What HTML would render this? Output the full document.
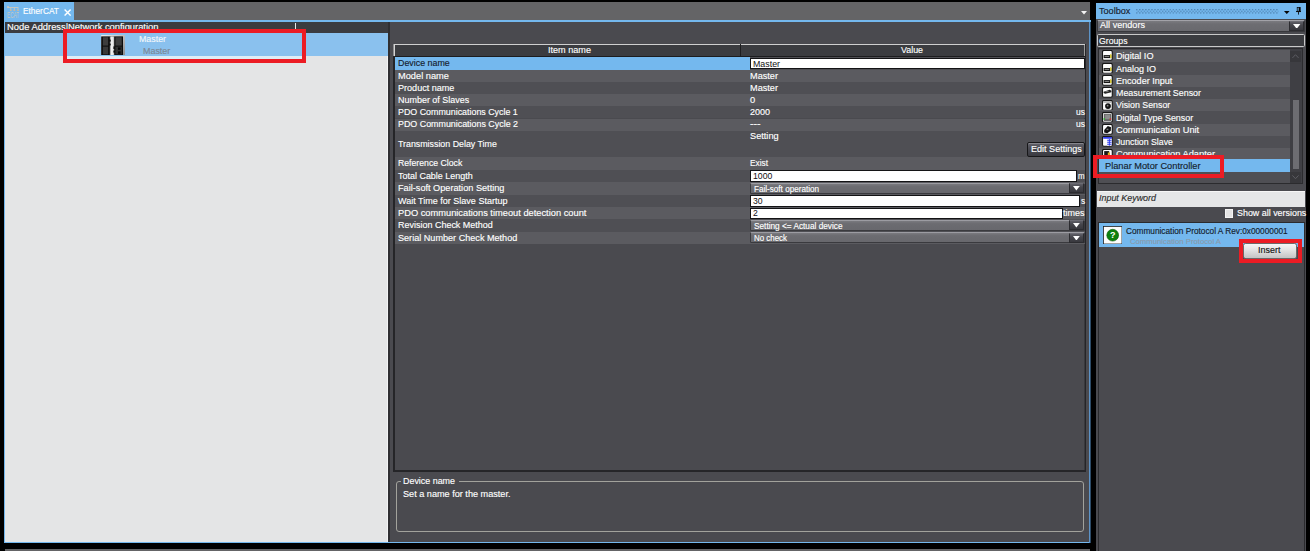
<!DOCTYPE html>
<html lang="en"><head><meta charset="utf-8"><title>EtherCAT</title>
<style>
html,body{margin:0;padding:0;background:#000;}
body{width:1310px;height:551px;position:relative;overflow:hidden;font-family:'Liberation Sans', sans-serif;}
#app{position:absolute;left:0;top:0;width:1310px;height:551px;overflow:hidden;background:#000;}
#app div,#app svg{position:absolute;box-sizing:border-box;}
.t{position:absolute;display:block;white-space:nowrap;transform-origin:0 50%;-webkit-text-stroke:0.14px currentColor;}
</style></head><body><div id="app">
<div style="left:4px;top:2.2px;width:1086px;height:17.8px;background:#646466;"></div>
<div style="left:4px;top:2.2px;width:69.8px;height:17.8px;background:#74b8ee;"></div>
<div style="left:4px;top:19.8px;width:1087px;height:523.2px;background:#74b8ee;"></div>
<div style="left:1089px;top:22px;width:1px;height:521px;background:#5e93c6;"></div>
<div style="left:1090px;top:22px;width:1px;height:521px;background:#2c4a66;"></div>
<div style="left:5px;top:21.7px;width:383px;height:520.5px;background:#e4e5e6;"></div>
<div style="left:387px;top:33px;width:1px;height:509px;background:#f2f3f4;"></div>
<div style="left:388px;top:21.7px;width:2px;height:520.5px;background:#2f2f32;"></div>
<div style="left:390px;top:21.7px;width:699px;height:520.5px;background:#4a4a4f;"></div>
<div style="left:4.5px;top:548.8px;width:1085px;height:3px;background:#646466;"></div>
<svg style="left:6.8px;top:6.1px" width="12.6" height="12.6" viewBox="0 0 12.6 12.6"><g fill="#dccbb4" opacity=".85"><rect x="0.1" y="0.1" width="1.7" height="2"/><rect x="1" y="1" width="10.4" height="0.9"/><rect x="3.4" y="1.5" width="0.8" height="2.6"/><rect x="6.9" y="1.5" width="0.8" height="2.6"/><rect x="10.6" y="1.5" width="0.8" height="2.6"/><rect x="2.9" y="3.6" width="1.8" height="1.3" fill="#e0b98c"/><rect x="6.4" y="3.6" width="1.8" height="1.3" fill="#e0b98c"/><rect x="10.1" y="3.6" width="1.8" height="1.3" fill="#e0b98c"/></g><text x="0" y="12.2" font-size="8.4" font-family="Liberation Sans, sans-serif" fill="#dccbb4" opacity=".8" textLength="12.2" lengthAdjust="spacingAndGlyphs">ECAT</text></svg>
<span class="t" style="left:22.90px;top:5.48px;font-size:8.65px;line-height:12.65px;color:#fff;transform:scaleX(0.9642);">EtherCAT</span>
<svg style="left:63.8px;top:9.1px" width="7.2" height="7.2" viewBox="0 0 7.2 7.2"><path d="M0.6 0.6 L6.6 6.6 M6.6 0.6 L0.6 6.6" stroke="#fff" stroke-width="1.35" fill="none"/></svg>
<svg style="left:1081px;top:11.3px" width="6" height="4" viewBox="0 0 6 4"><path d="M0 0 H6 L3 3.6 Z" fill="#f4f4f4"/></svg>
<div style="left:5px;top:21.7px;width:383px;height:11.6px;background:#3b3c40;"></div>
<span class="t" style="left:6.50px;top:21.05px;font-size:9.3px;line-height:13.3px;color:#fff;transform:scaleX(1.0044);">Node Address|Network configuration</span>
<div style="left:294.8px;top:23.3px;width:1px;height:10px;background:#e8e8e8;"></div>
<div style="left:5px;top:33.3px;width:383px;height:22.8px;background:#8ac1ee;"></div>
<svg style="left:100.6px;top:35.1px" width="24" height="20.4" viewBox="0 0 24 20.4"><defs><linearGradient id="dv" x1="0" x2="1"><stop offset="0" stop-color="#8c8c8c"/><stop offset=".45" stop-color="#ffffff"/><stop offset="1" stop-color="#b8b8b8"/></linearGradient><linearGradient id="dvb" x1="0" x2="1" y1="0" y2="1"><stop offset="0" stop-color="#f0f0f0"/><stop offset="1" stop-color="#8a8a8a"/></linearGradient></defs><rect x="0" y="0" width="24" height="20.4" rx="0.8" fill="url(#dvb)"/><rect x="0.2" y="1.4" width="21.8" height="19" fill="#0b0b0b"/><rect x="1.8" y="2.2" width="5.4" height="8.4" fill="#3d3d3d"/><rect x="1.8" y="11.6" width="5.4" height="7.8" fill="#383838"/><rect x="8.8" y="1.4" width="4.4" height="19" fill="url(#dv)"/><rect x="8.2" y="4.6" width="1.5" height="2" fill="#0b0b0b"/><rect x="8.2" y="8.6" width="1.5" height="1.8" fill="#0b0b0b"/><rect x="12.4" y="11.4" width="1.5" height="2.6" fill="#0b0b0b"/><rect x="12.4" y="15.6" width="1.5" height="2" fill="#0b0b0b"/><rect x="14.4" y="2.2" width="6.4" height="8.4" fill="#3d3d3d"/><rect x="14.4" y="11.6" width="6.4" height="7.8" fill="#303030"/><rect x="17" y="12.4" width="2.6" height="2.4" fill="#050505"/><rect x="17" y="16.4" width="2.6" height="2.4" fill="#050505"/></svg>
<span class="t" style="left:139.20px;top:32.55px;font-size:9.3px;line-height:13.3px;color:#f4f8fc;transform:scaleX(0.9500);">Master</span>
<span class="t" style="left:143.00px;top:44.85px;font-size:9.3px;line-height:13.3px;color:#7b8794;transform:scaleX(0.9605);">Master</span>
<div style="left:66px;top:56.1px;width:238px;height:4px;background:#dfedf6;"></div>
<div style="left:62.8px;top:29.2px;width:243.3px;height:34px;background:transparent;border:4px solid #ec1c24;"></div>
<div style="left:393px;top:44px;width:693px;height:428px;background:#252528;"></div>
<div style="left:395px;top:44px;width:690px;height:426px;background:#4a4a4f;"></div>
<div style="left:1084px;top:57px;width:1px;height:413px;background:rgba(37,37,40,.45);"></div>
<div style="left:393px;top:44px;width:692px;height:12.3px;background:#3b3c40;"></div>
<div style="left:393px;top:44px;width:347px;height:1px;background:#cfcfcf;"></div>
<div style="left:741px;top:44px;width:344px;height:1px;background:#cfcfcf;"></div>
<div style="left:393px;top:44px;width:1px;height:12.3px;background:#8e8e90;"></div>
<div style="left:394px;top:44px;width:1px;height:12.3px;background:#d4d4d4;"></div>
<div style="left:1084px;top:45px;width:1px;height:11.3px;background:#9a9a9a;"></div>
<div style="left:740px;top:44px;width:1px;height:12.3px;background:#1e1e20;"></div>
<div style="left:395px;top:56px;width:690px;height:1.3px;background:#1c1c1e;"></div>
<span class="t" style="left:547.90px;top:43.65px;font-size:9.3px;line-height:13.3px;color:#fff;transform:scaleX(0.9790);">Item name</span>
<span class="t" style="left:901.30px;top:43.65px;font-size:9.3px;line-height:13.3px;color:#fff;transform:scaleX(0.9526);">Value</span>
<div style="left:395px;top:57.3px;width:690px;height:12.400000000000006px;background:#4f4f54;"></div>
<div style="left:395px;top:57.3px;width:355.20000000000005px;height:12.400000000000006px;background:#74b8ee;"></div>
<span class="t" style="left:397.80px;top:57.35px;font-size:9.3px;line-height:13.3px;color:#14202c;transform:scaleX(0.9527);">Device name</span>
<div style="left:395px;top:69.7px;width:690px;height:12.200000000000003px;background:#5b5b60;"></div>
<span class="t" style="left:397.80px;top:69.65px;font-size:9.3px;line-height:13.3px;color:#fff;transform:scaleX(0.9947);">Model name</span>
<div style="left:395px;top:81.9px;width:690px;height:12.199999999999989px;background:#4f4f54;"></div>
<span class="t" style="left:397.80px;top:81.85px;font-size:9.3px;line-height:13.3px;color:#fff;transform:scaleX(0.9743);">Product name</span>
<div style="left:395px;top:94.1px;width:690px;height:12.200000000000003px;background:#5b5b60;"></div>
<span class="t" style="left:397.80px;top:94.05px;font-size:9.3px;line-height:13.3px;color:#fff;transform:scaleX(0.9636);">Number of Slaves</span>
<div style="left:395px;top:106.3px;width:690px;height:12.200000000000003px;background:#4f4f54;"></div>
<span class="t" style="left:397.80px;top:106.25px;font-size:9.3px;line-height:13.3px;color:#fff;transform:scaleX(0.9541);">PDO Communications Cycle 1</span>
<div style="left:395px;top:118.5px;width:690px;height:12.199999999999989px;background:#5b5b60;"></div>
<span class="t" style="left:397.80px;top:118.45px;font-size:9.3px;line-height:13.3px;color:#fff;transform:scaleX(0.9557);">PDO Communications Cycle 2</span>
<div style="left:395px;top:130.7px;width:690px;height:26.600000000000023px;background:#4f4f54;"></div>
<span class="t" style="left:397.80px;top:137.85px;font-size:9.3px;line-height:13.3px;color:#fff;transform:scaleX(0.9499);">Transmission Delay Time</span>
<div style="left:395px;top:157.3px;width:690px;height:12.449999999999989px;background:#5b5b60;"></div>
<span class="t" style="left:397.80px;top:157.38px;font-size:9.3px;line-height:13.3px;color:#fff;transform:scaleX(0.9355);">Reference Clock</span>
<div style="left:395px;top:169.75px;width:690px;height:12.449999999999989px;background:#4f4f54;"></div>
<span class="t" style="left:397.80px;top:169.82px;font-size:9.3px;line-height:13.3px;color:#fff;transform:scaleX(0.9635);">Total Cable Length</span>
<div style="left:395px;top:182.2px;width:690px;height:12.400000000000006px;background:#5b5b60;"></div>
<span class="t" style="left:397.80px;top:182.25px;font-size:9.3px;line-height:13.3px;color:#fff;transform:scaleX(0.9852);">Fail-soft Operation Setting</span>
<div style="left:395px;top:194.6px;width:690px;height:12.400000000000006px;background:#4f4f54;"></div>
<span class="t" style="left:397.80px;top:194.65px;font-size:9.3px;line-height:13.3px;color:#fff;transform:scaleX(0.9706);">Wait Time for Slave Startup</span>
<div style="left:395px;top:207.0px;width:690px;height:12.349999999999994px;background:#5b5b60;"></div>
<span class="t" style="left:397.80px;top:207.03px;font-size:9.3px;line-height:13.3px;color:#fff;transform:scaleX(0.9988);">PDO communications timeout detection count</span>
<div style="left:395px;top:219.35px;width:690px;height:12.349999999999994px;background:#4f4f54;"></div>
<span class="t" style="left:397.80px;top:219.37px;font-size:9.3px;line-height:13.3px;color:#fff;transform:scaleX(0.9655);">Revision Check Method</span>
<div style="left:395px;top:231.7px;width:690px;height:12.300000000000011px;background:#5b5b60;"></div>
<span class="t" style="left:397.80px;top:231.70px;font-size:9.3px;line-height:13.3px;color:#fff;transform:scaleX(0.9782);">Serial Number Check Method</span>
<div style="left:750.1999999999999px;top:57.9px;width:334.3999999999999px;height:11.400000000000006px;background:#fff;border:1px solid #141416;"></div>
<span class="t" style="left:752.60px;top:57.55px;font-size:9.3px;line-height:13.3px;color:#111;transform:scaleX(0.9500);-webkit-text-stroke:0;">Master</span>
<span class="t" style="left:750.40px;top:69.65px;font-size:9.3px;line-height:13.3px;color:#fff;transform:scaleX(0.9852);">Master</span>
<span class="t" style="left:750.40px;top:81.85px;font-size:9.3px;line-height:13.3px;color:#fff;transform:scaleX(0.9852);">Master</span>
<span class="t" style="left:750.40px;top:94.05px;font-size:9.3px;line-height:13.3px;color:#fff;transform:scaleX(1.0054);">0</span>
<span class="t" style="left:750.40px;top:106.25px;font-size:9.3px;line-height:13.3px;color:#fff;transform:scaleX(0.9668);">2000</span>
<span class="t" style="left:1075.70px;top:106.25px;font-size:9.3px;line-height:13.3px;color:#fff;transform:scaleX(0.9157);">us</span>
<span class="t" style="left:750.40px;top:118.45px;font-size:9.3px;line-height:13.3px;color:#fff;transform:scaleX(1.1402);">---</span>
<span class="t" style="left:1075.70px;top:118.45px;font-size:9.3px;line-height:13.3px;color:#fff;transform:scaleX(0.9157);">us</span>
<span class="t" style="left:750.40px;top:129.95px;font-size:9.3px;line-height:13.3px;color:#fff;transform:scaleX(0.9878);">Setting</span>
<div style="left:1027.3px;top:142.2px;width:57.3px;height:15.3px;background:#4a4a52;background:linear-gradient(#63636b,#4a4a52 45%,#3a3a40);border:1px solid #18181a;border-radius:2px;box-shadow:inset 0 1px 0 #85858c;"></div>
<span class="t" style="left:1030.80px;top:142.55px;font-size:9.3px;line-height:13.3px;color:#fff;transform:scaleX(0.9731);">Edit Settings</span>
<span class="t" style="left:750.40px;top:157.38px;font-size:9.3px;line-height:13.3px;color:#fff;transform:scaleX(0.8930);">Exist</span>
<div style="left:750.1999999999999px;top:170.35px;width:326.59999999999997px;height:11.449999999999989px;background:#fff;border:1px solid #141416;"></div>
<span class="t" style="left:752.60px;top:170.02px;font-size:9.3px;line-height:13.3px;color:#111;transform:scaleX(0.9329);-webkit-text-stroke:0;">1000</span>
<span class="t" style="left:1078.00px;top:170.12px;font-size:9.3px;line-height:13.3px;color:#fff;transform:scaleX(0.8516);">m</span>
<div style="left:750.4px;top:182.5px;width:334.19999999999993px;height:11.500000000000005px;background:#6e6e73;background:linear-gradient(#7a7a7f,#6c6c71 30%,#68686d);border:1px solid #3a3a3e;border-top-color:#9c9ca2;border-radius:1.5px;"></div>
<div style="left:1069px;top:183.2px;width:15px;height:10.200000000000006px;background:#404046;background:linear-gradient(#5e5e66,#46464c 40%,#38383e);border:1px solid #2c2c30;border-top-color:#6c6c74;"></div>
<svg style="left:1073.2px;top:186.20px" width="6.8" height="4.6" viewBox="0 0 6.8 4.6"><path d="M0 0 H6.8 L3.4 4.6 Z" fill="#fff"/></svg>
<span class="t" style="left:753.90px;top:182.51px;font-size:8.37px;line-height:12.37px;color:#fff;transform:scaleX(0.9713);">Fail-soft operation</span>
<div style="left:750.1999999999999px;top:195.2px;width:330.09999999999997px;height:11.400000000000006px;background:#fff;border:1px solid #141416;"></div>
<span class="t" style="left:752.60px;top:194.85px;font-size:9.3px;line-height:13.3px;color:#111;transform:scaleX(0.9281);-webkit-text-stroke:0;">30</span>
<span class="t" style="left:1080.60px;top:194.95px;font-size:9.3px;line-height:13.3px;color:#fff;transform:scaleX(0.9020);">s</span>
<div style="left:750.1999999999999px;top:207.6px;width:312.3999999999999px;height:11.349999999999994px;background:#fff;border:1px solid #141416;"></div>
<span class="t" style="left:752.60px;top:207.22px;font-size:9.3px;line-height:13.3px;color:#111;transform:scaleX(0.9281);-webkit-text-stroke:0;">2</span>
<span class="t" style="left:1063.20px;top:207.33px;font-size:9.3px;line-height:13.3px;color:#fff;transform:scaleX(0.9677);">times</span>
<div style="left:750.4px;top:219.65px;width:334.19999999999993px;height:11.449999999999994px;background:#6e6e73;background:linear-gradient(#7a7a7f,#6c6c71 30%,#68686d);border:1px solid #3a3a3e;border-top-color:#9c9ca2;border-radius:1.5px;"></div>
<div style="left:1069px;top:220.35px;width:15px;height:10.149999999999995px;background:#404046;background:linear-gradient(#5e5e66,#46464c 40%,#38383e);border:1px solid #2c2c30;border-top-color:#6c6c74;"></div>
<svg style="left:1073.2px;top:223.35px" width="6.8" height="4.6" viewBox="0 0 6.8 4.6"><path d="M0 0 H6.8 L3.4 4.6 Z" fill="#fff"/></svg>
<span class="t" style="left:753.90px;top:219.64px;font-size:8.37px;line-height:12.37px;color:#fff;transform:scaleX(0.9866);">Setting &lt;= Actual device</span>
<div style="left:750.4px;top:232.0px;width:334.19999999999993px;height:11.400000000000011px;background:#6e6e73;background:linear-gradient(#7a7a7f,#6c6c71 30%,#68686d);border:1px solid #3a3a3e;border-top-color:#9c9ca2;border-radius:1.5px;"></div>
<div style="left:1069px;top:232.7px;width:15px;height:10.100000000000012px;background:#404046;background:linear-gradient(#5e5e66,#46464c 40%,#38383e);border:1px solid #2c2c30;border-top-color:#6c6c74;"></div>
<svg style="left:1073.2px;top:235.70px" width="6.8" height="4.6" viewBox="0 0 6.8 4.6"><path d="M0 0 H6.8 L3.4 4.6 Z" fill="#fff"/></svg>
<span class="t" style="left:753.90px;top:231.97px;font-size:8.37px;line-height:12.37px;color:#fff;transform:scaleX(0.9467);">No check</span>
<div style="left:396px;top:481px;width:688px;height:51px;background:transparent;border:1px solid #a2a29c;border-radius:3px;"></div>
<div style="left:400.5px;top:479px;width:58px;height:4px;background:#4a4a4f;"></div>
<span class="t" style="left:402.50px;top:475.15px;font-size:9.3px;line-height:13.3px;color:#fff;transform:scaleX(0.9582);">Device name</span>
<span class="t" style="left:402.50px;top:488.35px;font-size:9.3px;line-height:13.3px;color:#fff;transform:scaleX(0.9812);">Set a name for the master.</span>
<div style="left:1095.5px;top:3px;width:210.5px;height:548px;background:#4a4a4f;"></div>
<div style="left:1095.5px;top:3px;width:210.5px;height:16.3px;background:#74b8ee;"></div>
<span class="t" style="left:1099.00px;top:4.95px;font-size:9.3px;line-height:13.3px;color:#14202c;transform:scaleX(0.9798);">Toolbox</span>
<svg style="left:1136px;top:8.7px" width="142.5" height="5.1" viewBox="0 0 142.5 5.1"><defs><pattern id="dots" width="3.05" height="3.4" patternUnits="userSpaceOnUse"><rect x="0" y="0" width="1.3" height="1.2" fill="#44749f"/><rect x="1.52" y="1.7" width="1.3" height="1.2" fill="#44749f"/></pattern></defs><rect width="142.5" height="5.1" fill="url(#dots)" opacity=".8"/></svg>
<svg style="left:1284.4px;top:10.6px" width="5.6" height="3.1" viewBox="0 0 5.6 3.1"><path d="M0 0 H5.6 L2.8 3.1 Z" fill="#060606"/></svg>
<svg style="left:1296.2px;top:7.1px" width="5" height="7.6" viewBox="0 0 5 7.6"><rect x="1.2" y="0.35" width="2.9" height="3.9" fill="none" stroke="#060606" stroke-width="0.75"/><rect x="2.7" y="0.2" width="1.6" height="4.2" fill="#060606"/><rect x="0" y="4.1" width="5" height="0.95" fill="#060606"/><rect x="2.1" y="5" width="0.85" height="2.6" fill="#060606"/></svg>
<div style="left:1097px;top:19.8px;width:207.79999999999995px;height:12.1px;background:#6e6e73;background:linear-gradient(#7b7b80,#6d6d72 30%,#69696e);border:1px solid #38383c;border-top-color:#a2a2a8;border-radius:1.5px;"></div>
<div style="left:1289px;top:20.8px;width:15px;height:10.2px;background:#404046;background:linear-gradient(#5e5e66,#46464c 40%,#38383e);border:1px solid #2c2c30;border-top-color:#6c6c74;"></div>
<svg style="left:1293.2px;top:23.6px" width="7.4" height="4.8" viewBox="0 0 7.4 4.8"><path d="M0 0 H7.4 L3.7 4.8 Z" fill="#fff"/></svg>
<span class="t" style="left:1099.80px;top:19.15px;font-size:9.3px;line-height:13.3px;color:#fff;transform:scaleX(0.9783);">All vendors</span>
<div style="left:1097px;top:34.3px;width:207.5999999999999px;height:12.6px;background:#3b3c40;border:1px solid #c9c9c9;border-radius:1.5px;"></div>
<span class="t" style="left:1098.50px;top:35.25px;font-size:9.3px;line-height:13.3px;color:#fff;transform:scaleX(0.9344);">Groups</span>
<div style="left:1098px;top:48.3px;width:205.20000000000005px;height:136px;background:#2b2b2e;"></div>
<div style="left:1099px;top:49.3px;width:203.20000000000005px;height:134px;background:#4a4a4f;"></div>
<div style="left:1099px;top:50.0px;width:190.5999999999999px;height:12.28px;background:#5b5b60;"></div>
<svg style="left:1102.20px;top:50.40px" width="10.8" height="10.6" viewBox="-0.2 -0.1 10.8 10.6"><rect x="0.3" y="0.3" width="9.8" height="9.8" rx="1.5" fill="#fdfdfd" stroke="#161616" stroke-width="1.1"/><rect x="1.4" y="5" width="7.8" height="3" fill="#151515"/><rect x="7.8" y="4.2" width="1.6" height="3.8" fill="#d8c838"/><rect x="2.4" y="6" width="4.6" height="0.9" fill="#8a8a8a"/></svg>
<span class="t" style="left:1116.00px;top:50.24px;font-size:9.3px;line-height:13.3px;color:#fff;transform:scaleX(0.9808);">Digital IO</span>
<div style="left:1099px;top:62.28px;width:190.5999999999999px;height:12.28px;background:#4f4f54;"></div>
<svg style="left:1102.20px;top:62.68px" width="10.8" height="10.6" viewBox="-0.2 -0.1 10.8 10.6"><rect x="0.3" y="0.3" width="9.8" height="9.8" rx="1.5" fill="#fdfdfd" stroke="#161616" stroke-width="1.1"/><rect x="1.4" y="5" width="7.8" height="3" fill="#151515"/><rect x="7.8" y="4.2" width="1.6" height="3.8" fill="#d8c838"/><rect x="2.4" y="6" width="4.6" height="0.9" fill="#8a8a8a"/></svg>
<span class="t" style="left:1116.00px;top:62.52px;font-size:9.3px;line-height:13.3px;color:#fff;transform:scaleX(0.9671);">Analog IO</span>
<div style="left:1099px;top:74.56px;width:190.5999999999999px;height:12.28px;background:#5b5b60;"></div>
<svg style="left:1102.20px;top:74.96px" width="10.8" height="10.6" viewBox="-0.2 -0.1 10.8 10.6"><rect x="0.3" y="0.3" width="9.8" height="9.8" rx="1.5" fill="#fdfdfd" stroke="#161616" stroke-width="1.1"/><rect x="1.4" y="5" width="7.8" height="3" fill="#151515"/><rect x="7.8" y="4.2" width="1.6" height="3.8" fill="#d8c838"/><rect x="2.4" y="6" width="4.6" height="0.9" fill="#8a8a8a"/></svg>
<span class="t" style="left:1116.00px;top:74.80px;font-size:9.3px;line-height:13.3px;color:#fff;transform:scaleX(0.9725);">Encoder Input</span>
<div style="left:1099px;top:86.84px;width:190.5999999999999px;height:12.28px;background:#4f4f54;"></div>
<svg style="left:1102.20px;top:87.24px" width="10.8" height="10.6" viewBox="-0.2 -0.1 10.8 10.6"><rect x="0.3" y="0.3" width="9.8" height="9.8" rx="1.5" fill="#fdfdfd" stroke="#161616" stroke-width="1.1"/><path d="M1.4 4.6 L7.4 2.6 L9.2 3.6 L9.2 5.2 L3 6.6 L1.4 6 Z" fill="#222"/><rect x="3.2" y="4.2" width="3.2" height="0.8" fill="#999"/></svg>
<span class="t" style="left:1116.00px;top:87.08px;font-size:9.3px;line-height:13.3px;color:#fff;transform:scaleX(0.9562);">Measurement Sensor</span>
<div style="left:1099px;top:99.12px;width:190.5999999999999px;height:12.28px;background:#5b5b60;"></div>
<svg style="left:1102.20px;top:99.52px" width="10.8" height="10.6" viewBox="-0.2 -0.1 10.8 10.6"><rect x="0.3" y="0.3" width="9.8" height="9.8" rx="1.5" fill="#fdfdfd" stroke="#161616" stroke-width="1.1"/><rect x="1.2" y="1.4" width="8" height="1" fill="#777"/><circle cx="5.8" cy="6" r="2.9" fill="#111"/><circle cx="5.4" cy="5.6" r="0.9" fill="#888"/></svg>
<span class="t" style="left:1116.00px;top:99.36px;font-size:9.3px;line-height:13.3px;color:#fff;transform:scaleX(0.9492);">Vision Sensor</span>
<div style="left:1099px;top:111.4px;width:190.5999999999999px;height:12.28px;background:#4f4f54;"></div>
<svg style="left:1102.20px;top:111.80px" width="10.8" height="10.6" viewBox="-0.2 -0.1 10.8 10.6"><rect x="0.3" y="0.3" width="9.8" height="9.8" rx="1.5" fill="#fdfdfd" stroke="#161616" stroke-width="1.1"/><rect x="1.6" y="1.6" width="7.4" height="7.4" fill="#6a6a6a"/><rect x="3" y="2.6" width="4.8" height="4.4" fill="#8c8c8c"/><rect x="1.2" y="6.2" width="1.6" height="1.4" fill="#2db82d"/><rect x="7.4" y="6.2" width="1.6" height="1.4" fill="#d03030"/></svg>
<span class="t" style="left:1116.00px;top:111.64px;font-size:9.3px;line-height:13.3px;color:#fff;transform:scaleX(0.9596);">Digital Type Sensor</span>
<div style="left:1099px;top:123.67999999999999px;width:190.5999999999999px;height:12.28px;background:#5b5b60;"></div>
<svg style="left:1102.20px;top:124.08px" width="10.8" height="10.6" viewBox="-0.2 -0.1 10.8 10.6"><rect x="0.3" y="0.3" width="9.8" height="9.8" rx="1.5" fill="#fdfdfd" stroke="#161616" stroke-width="1.1"/><path d="M2 6 L5.6 2 L8.8 3.2 L8.6 6.6 L5 9.2 L2 8.4 Z" fill="#121212"/><rect x="4.4" y="4.6" width="1.8" height="1.4" fill="#777"/></svg>
<span class="t" style="left:1116.00px;top:123.92px;font-size:9.3px;line-height:13.3px;color:#fff;transform:scaleX(0.9938);">Communication Unit</span>
<div style="left:1099px;top:135.95999999999998px;width:190.5999999999999px;height:12.28px;background:#4f4f54;"></div>
<svg style="left:1102.20px;top:136.36px" width="10.8" height="10.6" viewBox="-0.2 -0.1 10.8 10.6"><rect x="0.3" y="0.3" width="9.8" height="9.8" rx="1.5" fill="#fdfdfd" stroke="#161616" stroke-width="1.1"/><rect x="1" y="1" width="8.6" height="1.6" fill="#1c2cf0"/><rect x="4.8" y="3" width="4.6" height="6.6" fill="#eef"/><path d="M5 4.2 H9.4 M5 6.2 H9.4 M5 8.2 H9.4 M7.2 3 V9.6" stroke="#2434f0" stroke-width="0.9" fill="none"/></svg>
<span class="t" style="left:1116.00px;top:136.20px;font-size:9.3px;line-height:13.3px;color:#fff;transform:scaleX(0.9410);">Junction Slave</span>
<div style="left:1099px;top:148.24px;width:190.5999999999999px;height:12.28px;background:#5b5b60;"></div>
<svg style="left:1102.20px;top:148.64px" width="10.8" height="10.6" viewBox="-0.2 -0.1 10.8 10.6"><rect x="0.3" y="0.3" width="9.8" height="9.8" rx="1.5" fill="#fdfdfd" stroke="#161616" stroke-width="1.1"/><rect x="2" y="2" width="5" height="8" fill="#181818"/><rect x="5.6" y="3.4" width="2.2" height="6" fill="#e0b020"/></svg>
<span class="t" style="left:1116.00px;top:148.48px;font-size:9.3px;line-height:13.3px;color:#fff;transform:scaleX(0.9976);">Communication Adapter</span>
<div style="left:1099px;top:159px;width:190.5999999999999px;height:13px;background:#74b8ee;"></div>
<div style="left:1099px;top:172px;width:190.5999999999999px;height:11.3px;background:#4f4f54;"></div>
<span class="t" style="left:1105.00px;top:159.95px;font-size:9.3px;line-height:13.3px;color:#14202c;transform:scaleX(0.9937);">Planar Motor Controller</span>
<div style="left:1289.8px;top:49.3px;width:12.4px;height:134px;background:#3f3f44;"></div>
<div style="left:1290.4px;top:50.8px;width:11px;height:11px;background:#37373b;"></div>
<div style="left:1290.4px;top:171.8px;width:11px;height:10.8px;background:#37373b;"></div>
<svg style="left:1292.4px;top:53.6px" width="7" height="4.4" viewBox="0 0 7 4.4"><path d="M0.4 4 L3.5 0.7 L6.6 4" stroke="#5c5c62" stroke-width="1" fill="none"/></svg>
<svg style="left:1292.4px;top:175px" width="7" height="4.4" viewBox="0 0 7 4.4"><path d="M0.4 0.4 L3.5 3.7 L6.6 0.4" stroke="#5c5c62" stroke-width="1" fill="none"/></svg>
<div style="left:1293px;top:99.5px;width:5.8px;height:69.8px;background:#6d6d72;"></div>
<div style="left:1093px;top:155px;width:130.5px;height:23px;background:transparent;border:4px solid #ec1c24;border-left-width:4.5px;border-right-width:4.5px;"></div>
<div style="left:1097px;top:191px;width:208px;height:15.7px;background:#e5e6e7;border-top:1px solid #f6f6f6;"></div>
<span class="t" style="left:1099.00px;top:191.55px;font-size:9.3px;line-height:13.3px;color:#2a2a2a;transform:scaleX(0.9590);font-style:italic;">Input Keyword</span>
<div style="left:1225.2px;top:209.3px;width:8.2px;height:8.3px;background:#e4e4e4;border:1px solid #f4f4f4;"></div>
<span class="t" style="left:1236.70px;top:207.35px;font-size:9.3px;line-height:13.3px;color:#fff;transform:scaleX(0.9579);">Show all versions</span>
<div style="left:1098px;top:221.5px;width:206.79999999999995px;height:340px;background:#2b2b2e;"></div>
<div style="left:1099px;top:222.5px;width:204.79999999999995px;height:340px;background:#4a4a4f;"></div>
<div style="left:1099.4px;top:223.2px;width:204.19999999999982px;height:23.8px;background:#74b8ee;"></div>
<svg style="left:1103px;top:226px" width="19.4" height="18.4" viewBox="0 0 19.4 18.4"><rect x="0.4" y="0.4" width="18.6" height="17.6" fill="#fdfdfd" stroke="#202020" stroke-width="0.8"/><circle cx="9.7" cy="9.2" r="5.9" fill="#0c800c"/><circle cx="9.7" cy="9.2" r="5.9" fill="none" stroke="#0a5c0a" stroke-width="0.6"/><text x="9.7" y="12.4" text-anchor="middle" font-family="Liberation Sans, sans-serif" font-weight="bold" font-size="9" fill="#fff">?</text></svg>
<span class="t" style="left:1126.30px;top:224.92px;font-size:8.56px;line-height:12.56px;color:#14202c;transform:scaleX(0.9668);">Communication Protocol A Rev:0x00000001</span>
<span class="t" style="left:1130.00px;top:235.80px;font-size:8.0px;line-height:12.0px;color:#8b9aaa;transform:scaleX(0.9654);">Communication Protocol A</span>
<div style="left:1242.7px;top:242.9px;width:54px;height:16px;background:#ddd;background:linear-gradient(#f6f6f6,#e2e2e2 45%,#c4c4c4);border:1px solid #6a6a6a;border-radius:2.5px;"></div>
<span class="t" style="left:1257.60px;top:244.45px;font-size:9.3px;line-height:13.3px;color:#111;transform:scaleX(0.9628);">Insert</span>
<div style="left:1238.8px;top:238.9px;width:62.8px;height:23.9px;background:transparent;border:4px solid #ec1c24;"></div>
</div></body></html>
